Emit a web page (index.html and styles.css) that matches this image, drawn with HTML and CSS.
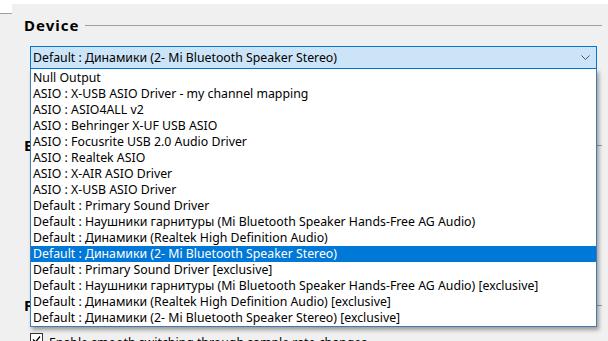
FILE: index.html
```html
<!DOCTYPE html>
<html lang="en">
<head>
  <meta charset="UTF-8">
  <title>Device settings</title>
  <link rel="stylesheet" href="styles.css">
</head>
<body>

<div class="top">
  <div class="top-corner"></div>
  <div class="top-fill"></div>
</div>

<div class="panel">
  <section class="group">
    <div class="group-head">
      <h3>Device</h3>
      <span class="rule"></span>
    </div>
    <div class="combo-wrap">
      <div class="combo">
        <span id="current">Default : Динамики (2- Mi Bluetooth Speaker Stereo)</span>
        <svg class="chevron" width="9" height="6" viewBox="0 0 9 6">
          <path d="M0.5 0.5 L4.5 4.5 L8.5 0.5" fill="none" stroke="#555" stroke-width="1"/>
        </svg>
      </div>
      <ul class="dropdown" id="devices"></ul>
    </div>
  </section>

  <section class="group group-buffer">
    <div class="group-head">
      <h3>Exclusive</h3>
      <span class="rule"></span>
    </div>
  </section>

  <section class="group group-format">
    <div class="group-head">
      <h3>Format</h3>
      <span class="rule"></span>
    </div>
    <div class="check">
      <span class="box">
        <svg width="11" height="11" viewBox="0 0 11 11">
          <path d="M2 5.5 L4.5 8 L9 2.5" fill="none" stroke="#000" stroke-width="1.3"/>
        </svg>
      </span>
      <span class="check-label">Enable smooth switching through sample rate changes</span>
    </div>
  </section>
</div>

<script>
  const devices = [
    "Null Output",
    "ASIO : X-USB ASIO Driver - my channel mapping",
    "ASIO : ASIO4ALL v2",
    "ASIO : Behringer X-UF USB ASIO",
    "ASIO : Focusrite USB 2.0 Audio Driver",
    "ASIO : Realtek ASIO",
    "ASIO : X-AIR ASIO Driver",
    "ASIO : X-USB ASIO Driver",
    "Default : Primary Sound Driver",
    "Default : Наушники гарнитуры (Mi Bluetooth Speaker Hands-Free AG Audio)",
    "Default : Динамики (Realtek High Definition Audio)",
    "Default : Динамики (2- Mi Bluetooth Speaker Stereo)",
    "Default : Primary Sound Driver [exclusive]",
    "Default : Наушники гарнитуры (Mi Bluetooth Speaker Hands-Free AG Audio) [exclusive]",
    "Default : Динамики (Realtek High Definition Audio) [exclusive]",
    "Default : Динамики (2- Mi Bluetooth Speaker Stereo) [exclusive]"
  ];

  const list = document.getElementById("devices");
  const current = document.getElementById("current");

  devices.forEach(name => {
    const li = document.createElement("li");
    li.innerText = name;
    if (name === current.innerText) {
      li.className = "selected";
    }
    list.appendChild(li);
  });
</script>

</body>
</html>
```

FILE: styles.css
```css
body {
  margin: 0;
  background: #f0f0f0;
  font-family: "Noto Sans", "Open Sans", sans-serif;
  font-size: 12.3px;
  color: #000;
  overflow: hidden;
}
.top {
  display: flex;
  height: 14px;
}
.top-corner {
  width: 12px;
  background: #fff;
  border-bottom: 1px solid #a0a0a0;
}
.top-fill {
  flex: 1;
  border-top: 4px solid #fff;
}
.group-head {
  display: flex;
  align-items: center;
  padding-left: 24px;
  padding-right: 6px;
  height: 22px;
}
.group-head h3 {
  margin: 0;
  font-size: 15px;
  font-weight: bold;
  letter-spacing: 1px;
  line-height: 22px;
}
.rule {
  flex: 1;
  height: 1px;
  margin-left: 6px;
  background: #a0a0a0;
}
.combo-wrap {
  position: relative;
  margin: 10px 11px 0 30px;
}
.combo {
  display: flex;
  align-items: center;
  justify-content: space-between;
  box-sizing: border-box;
  height: 23px;
  padding: 0 6px 0 2px;
  background: #cce4f7;
  border: 1px solid #0078d7;
}
.dropdown {
  position: absolute;
  top: 100%;
  left: 0;
  right: 0;
  z-index: 2;
  margin: 0;
  padding: 1px 0 0;
  list-style: none;
  background: #fff;
  border: 1px solid #3f7cb5;
  border-top: none;
  box-shadow: 2px 3px 4px rgba(0,0,0,0.35);
}
.dropdown li {
  height: 16px;
  line-height: 16px;
  padding-left: 2px;
  white-space: nowrap;
}
.dropdown li.selected {
  background: #0078d7;
  color: #fff;
}
.group-buffer {
  margin-top: 65px;
}
.group-format {
  margin-top: 138px;
}
.check {
  display: flex;
  align-items: flex-start;
  gap: 6px;
  margin: 17px 0 0 30px;
}
.check .box {
  display: flex;
  align-items: center;
  justify-content: center;
  box-sizing: border-box;
  width: 13px;
  height: 13px;
  background: #fff;
  border: 1px solid #333;
}
.check-label {
  padding-top: 2px;
  line-height: 16px;
}
```
